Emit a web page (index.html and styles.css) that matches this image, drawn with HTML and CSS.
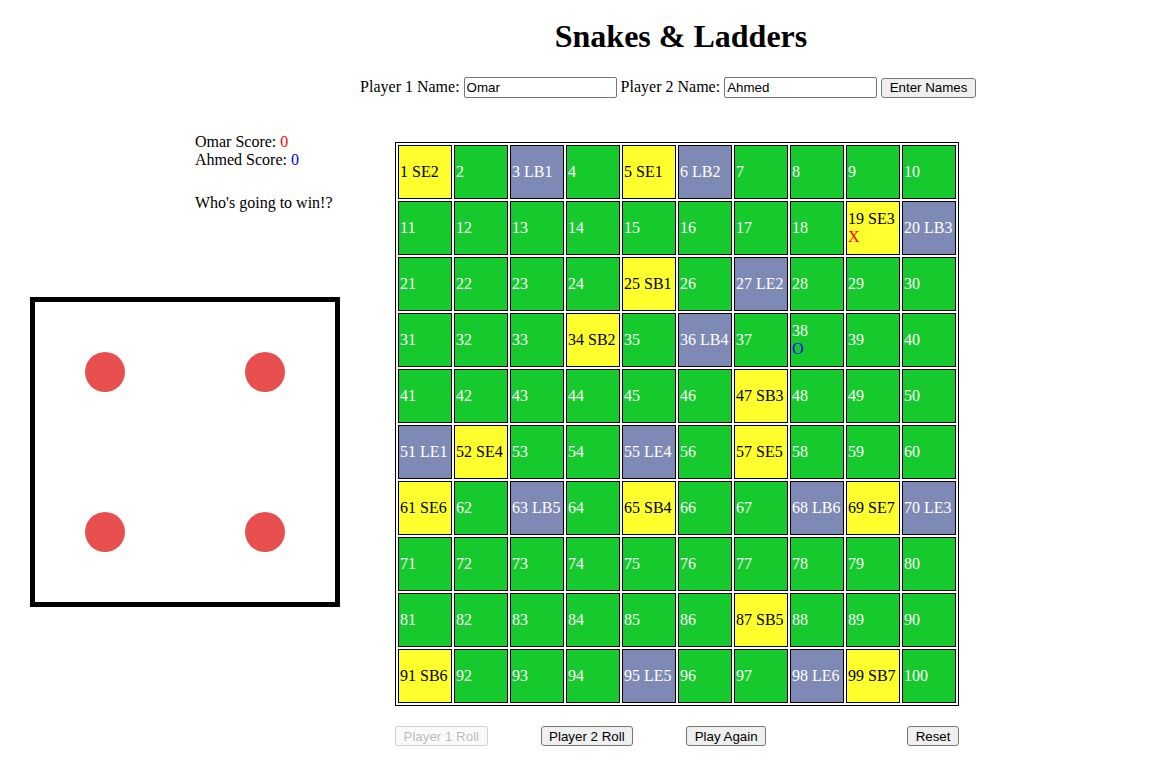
FILE: index.html
```html
<!DOCTYPE html>
<html lang="en">
<head>
<meta charset="utf-8">
<title>Snakes &amp; Ladders</title>
<link rel="stylesheet" href="styles.css">
</head>
<body>
<div class="page">
  <header class="header">
    <h1 class="title">Snakes &amp; Ladders</h1>
    <div class="names">Player 1 Name: <input class="name-input" type="text" value="Omar"> Player 2 Name: <input class="name-input" type="text" value="Ahmed"> <button class="btn">Enter Names</button></div>
  </header>
  <main class="main">
    <section class="side">
      <div class="scores">
        <div class="score-line">Omar Score: <span class="p1">0</span></div>
        <div class="score-line">Ahmed Score: <span class="p2">0</span></div>
        <div class="message">Who's going to win!?</div>
      </div>
      <div class="die">
        <span class="pip"></span><span class="pip"></span>
        <span class="pip"></span><span class="pip"></span>
      </div>
    </section>
    <section class="game">
      <table class="board">
        <tr><td class="y">1 SE2</td><td>2</td><td class="s">3 LB1</td><td>4</td><td class="y">5 SE1</td><td class="s">6 LB2</td><td>7</td><td>8</td><td>9</td><td>10</td></tr>
        <tr><td>11</td><td>12</td><td>13</td><td>14</td><td>15</td><td>16</td><td>17</td><td>18</td><td class="y">19 SE3<br><span class="tok-x">X</span></td><td class="s">20 LB3</td></tr>
        <tr><td>21</td><td>22</td><td>23</td><td>24</td><td class="y">25 SB1</td><td>26</td><td class="s">27 LE2</td><td>28</td><td>29</td><td>30</td></tr>
        <tr><td>31</td><td>32</td><td>33</td><td class="y">34 SB2</td><td>35</td><td class="s">36 LB4</td><td>37</td><td>38<br><span class="tok-o">O</span></td><td>39</td><td>40</td></tr>
        <tr><td>41</td><td>42</td><td>43</td><td>44</td><td>45</td><td>46</td><td class="y">47 SB3</td><td>48</td><td>49</td><td>50</td></tr>
        <tr><td class="s">51 LE1</td><td class="y">52 SE4</td><td>53</td><td>54</td><td class="s">55 LE4</td><td>56</td><td class="y">57 SE5</td><td>58</td><td>59</td><td>60</td></tr>
        <tr><td class="y">61 SE6</td><td>62</td><td class="s">63 LB5</td><td>64</td><td class="y">65 SB4</td><td>66</td><td>67</td><td class="s">68 LB6</td><td class="y">69 SE7</td><td class="s">70 LE3</td></tr>
        <tr><td>71</td><td>72</td><td>73</td><td>74</td><td>75</td><td>76</td><td>77</td><td>78</td><td>79</td><td>80</td></tr>
        <tr><td>81</td><td>82</td><td>83</td><td>84</td><td>85</td><td>86</td><td class="y">87 SB5</td><td>88</td><td>89</td><td>90</td></tr>
        <tr><td class="y">91 SB6</td><td>92</td><td>93</td><td>94</td><td class="s">95 LE5</td><td>96</td><td>97</td><td class="s">98 LE6</td><td class="y">99 SB7</td><td>100</td></tr>
      </table>
      <div class="controls">
        <button class="btn" disabled>Player 1 Roll</button>
        <button class="btn">Player 2 Roll</button>
        <button class="btn">Play Again</button>
        <button class="btn reset">Reset</button>
      </div>
    </section>
  </main>
</div>
</body>
</html>
```

FILE: styles.css
```css
html, body {
  margin: 0;
  padding: 0;
  background: #ffffff;
}

body {
  font-family: "Liberation Serif", "Times New Roman", Times, serif;
  font-size: 16px;
  color: #000000;
}

.page {
  padding: 8px;
}

.header {
  display: flex;
  flex-direction: column;
}

.title {
  margin: 10px 0 0 0;
  padding-left: 205px;
  font-size: 32px;
  font-weight: bold;
  line-height: 36px;
  text-align: center;
}

.names {
  margin-top: 21px;
  padding-left: 179px;
  text-align: center;
  line-height: 23px;
  white-space: nowrap;
}

.name-input {
  box-sizing: border-box;
  width: 153px;
  height: 21px;
  padding: 1px 2px;
  border: 1px solid #767676;
  border-radius: 2px;
  font-family: "Liberation Sans", Arial, sans-serif;
  font-size: 13.33px;
  color: #000;
  vertical-align: baseline;
}

.btn {
  box-sizing: border-box;
  height: 20px;
  padding: 1px 7.5px;
  border: 1px solid #767676;
  border-radius: 3px;
  background: #efefef;
  font-family: "Liberation Sans", Arial, sans-serif;
  font-size: 13.33px;
  color: #000;
}

.btn:disabled {
  color: rgba(16, 16, 16, 0.3);
  border-color: rgba(118, 118, 118, 0.3);
  background: rgba(239, 239, 239, 0.3);
}

.main {
  display: flex;
  align-items: flex-start;
  margin-top: 35px;
}

.side {
  width: 387px;
  flex: none;
  display: flex;
  flex-direction: column;
}

.scores {
  padding-left: 187px;
  line-height: 18px;
}

.p1 { color: #ff0000; }
.p2 { color: #0000ff; }

.message {
  margin-top: 25px;
}

.die {
  box-sizing: border-box;
  width: 310px;
  height: 310px;
  margin: 85px 0 0 22px;
  border: 5px solid #000;
  padding: 50px;
  display: grid;
  grid-template-columns: 40px 40px;
  grid-template-rows: 40px 40px;
  justify-content: space-between;
  align-content: space-between;
}

.pip {
  display: block;
  width: 40px;
  height: 40px;
  border-radius: 50%;
  background: #e85050;
}

.game {
  display: flex;
  flex-direction: column;
}

.board {
  margin-top: 9px;
  border: 1px solid #000;
  border-spacing: 2px;
  border-collapse: separate;
}

.board td {
  box-sizing: border-box;
  width: 54px;
  height: 54px;
  padding: 0 1px;
  border: 1px solid #000;
  background: #16c92c;
  color: #ffffff;
  line-height: 18px;
  vertical-align: middle;
  text-align: left;
  white-space: nowrap;
}

.board td.y {
  background: #ffff2e;
  color: #000000;
}

.board td.s {
  background: #7f89b5;
  color: #ffffff;
}

.tok-x { color: #ff0000; }
.tok-o { color: #0000ff; }

.controls {
  display: flex;
  gap: 53px;
  margin-top: 20px;
  width: 564px;
}

.reset {
  margin-left: auto;
}
```
